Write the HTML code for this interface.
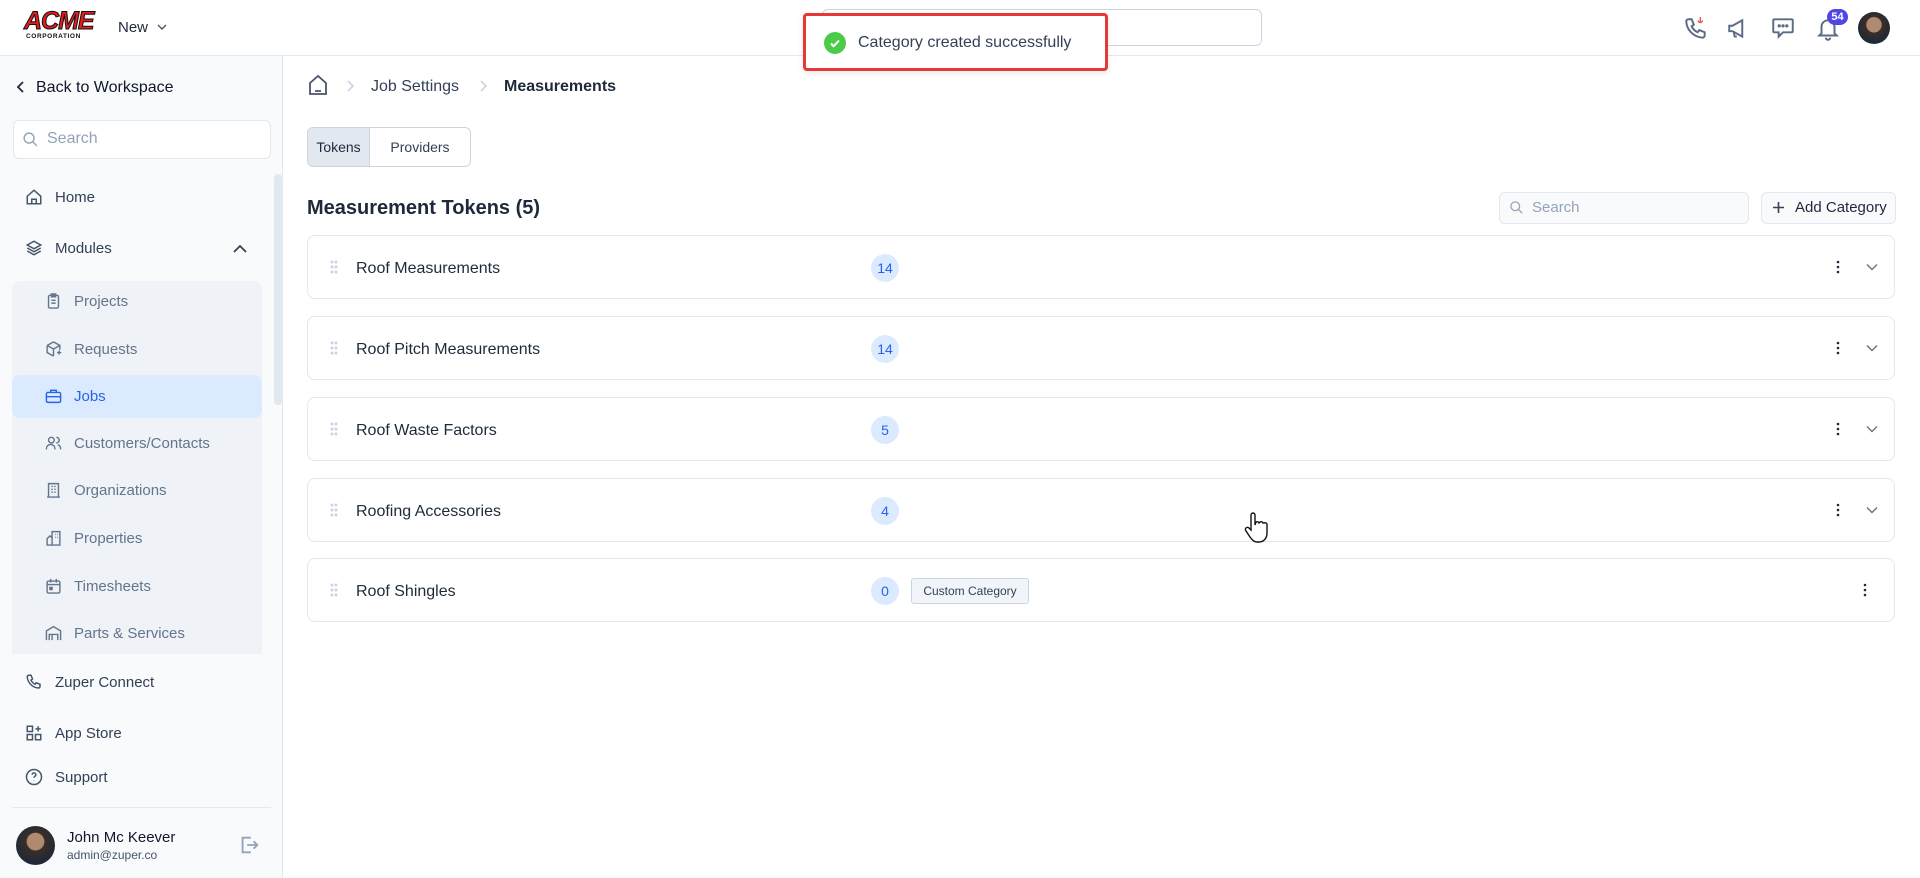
<!DOCTYPE html>
<html><head><meta charset="utf-8"><style>
*{box-sizing:border-box;margin:0;padding:0}
body{width:1920px;height:878px;overflow:hidden;background:#fff;font-family:"Liberation Sans",sans-serif;color:#1e293b;position:relative}
.abs{position:absolute}
svg{display:block}
.hdr{left:0;top:0;width:1920px;height:56px;border-bottom:1px solid #e2e8f0;background:#fff}
.side{left:0;top:56px;width:283px;height:822px;background:#f8fafc;border-right:1px solid #e2e8f0}
.nav{position:absolute;display:flex;align-items:center;font-size:15px;color:#334155}
.nav svg{margin-right:12px}
.sub{color:#64748b}
.row{position:absolute;left:307px;width:1588px;height:64px;border:1px solid #e2e8f0;border-radius:8px;background:#fff}
.row .t{position:absolute;left:48px;top:24px;font-size:16px;color:#1e293b}
.row .b{position:absolute;left:563px;top:18px;width:28px;height:28px;border-radius:50%;background:#dbeafe;color:#2563eb;font-size:14px;text-align:center;line-height:28px}
.row .d{position:absolute;left:22px;top:24px}
.row .k{position:absolute;left:1528px;top:23px}
.row .c{position:absolute;left:1558px;top:27px}
</style></head><body>
<div class="abs hdr"></div>
<div class="abs" style="left:24px;top:8px;font-family:'Liberation Sans';font-weight:900;font-style:italic;font-size:25px;color:#e11d1d;letter-spacing:-1px;line-height:26px;-webkit-text-stroke:1px #111">ACME</div>
<div class="abs" style="left:26px;top:33px;font-size:6.5px;font-weight:bold;color:#111;letter-spacing:0.6px">CORPORATION</div>
<div class="abs" style="left:118px;top:19px;font-size:15px;color:#1e293b">New</div>
<svg class="abs" style="left:157px;top:23px" width="10" height="8" viewBox="0 0 10 8"><path d="M1 2l4 4 4-4" fill="none" stroke="#475569" stroke-width="1.4"/></svg>
<div class="abs" style="left:822px;top:9px;width:440px;height:37px;border:1px solid #cbd5e1;border-radius:6px"></div>
<div class="abs" style="left:803px;top:13px;width:305px;height:58px;border:3px solid #e53935;border-radius:4px;background:#fff;box-shadow:0 2px 6px rgba(0,0,0,.1)"></div>
<div class="abs" style="left:824px;top:32px;width:22px;height:22px;border-radius:50%;background:#4ccb48"></div>
<svg class="abs" style="left:828px;top:36px" width="14" height="14" viewBox="0 0 14 14"><path d="M3 7.5l2.7 2.7L11 4.5" fill="none" stroke="#fff" stroke-width="2"/></svg>
<div class="abs" style="left:858px;top:34px;font-size:16px;color:#334155">Category created successfully</div>
<svg class="abs" style="left:1683px;top:16px" width="26" height="26" viewBox="0 0 24 24" fill="none" stroke="#5b6b82" stroke-width="1.8"><path d="M5 3h3l2 5-2 1.5a11 11 0 005.5 5.5L15 13l5 2v3a2 2 0 01-2 2A16 16 0 013 5a2 2 0 012-2z"/><path d="M16 1v5M14 4a2 2 0 004 0" stroke="#ef4444" stroke-width="1.2"/></svg>
<svg class="abs" style="left:1726px;top:16px" width="26" height="26" viewBox="0 0 24 24" fill="none" stroke="#5b6b82" stroke-width="1.8"><path d="M3 9v5h3l9 5V4L6 9H3zM7 14l1 5h2"/></svg>
<svg class="abs" style="left:1770px;top:15px" width="26" height="26" viewBox="0 0 24 24" fill="none" stroke="#5b6b82" stroke-width="1.8"><path d="M4 4h16a1 1 0 011 1v10a1 1 0 01-1 1h-8l-4 4v-4H4a1 1 0 01-1-1V5a1 1 0 011-1z"/><circle cx="8.5" cy="10" r=".6" fill="#5b6b82"/><circle cx="12" cy="10" r=".6" fill="#5b6b82"/><circle cx="15.5" cy="10" r=".6" fill="#5b6b82"/></svg>
<svg class="abs" style="left:1815px;top:16px" width="26" height="26" viewBox="0 0 24 24" fill="none" stroke="#5b6b82" stroke-width="1.8"><path d="M6 16V10a6 6 0 0112 0v6l2 2H4l2-2zM10 20a2 2 0 004 0"/></svg>
<div class="abs" style="left:1827px;top:9px;width:21px;height:16px;border-radius:8px;background:#4f46e5;color:#fff;font-size:11px;font-weight:bold;text-align:center;line-height:16px">54</div>
<div class="abs" style="left:1858px;top:12px;width:32px;height:32px;border-radius:50%;background:radial-gradient(circle at 50% 40%,#b08a70 0 30%,#3a2e28 32%,#1f2937 70%)"></div>
<div class="abs side"></div>
<svg class="abs" style="left:16px;top:81px" width="10" height="12" viewBox="0 0 10 12"><path d="M7 1L2 6l5 5" fill="none" stroke="#1e293b" stroke-width="1.8"/></svg>
<div class="abs" style="left:36px;top:79px;font-size:16px;color:#0f172a">Back to Workspace</div>
<div class="abs" style="left:13px;top:120px;width:258px;height:39px;background:#fff;border:1px solid #e2e8f0;border-radius:6px"></div>
<svg class="abs" style="left:22px;top:131px" width="17" height="17" viewBox="0 0 24 24" fill="none" stroke="#94a3b8" stroke-width="2"><circle cx="10" cy="10" r="7"/><path d="M15 15l6 6"/></svg>
<div class="abs" style="left:47px;top:130px;font-size:16px;color:#94a3b8">Search</div>
<div class="abs" style="left:274px;top:174px;width:8px;height:231px;border-radius:4px;background:#e2e8f0"></div>
<div class="nav" style="left:25px;top:188px"><svg width="18" height="18" viewBox="0 0 24 24" fill="none" stroke="#475569" stroke-width="2"><path d="M3 11l9-8 9 8v10H3zM9 21v-6h6v6"/></svg>Home</div>
<div class="nav" style="left:25px;top:239px"><svg width="18" height="18" viewBox="0 0 24 24" fill="none" stroke="#475569" stroke-width="2"><path d="M12 3l9 5-9 5-9-5zM3 12l9 5 9-5M3 16l9 5 9-5"/></svg>Modules</div>
<svg class="abs" style="left:233px;top:244px" width="14" height="9" viewBox="0 0 14 9"><path d="M1 8l6-6 6 6" fill="none" stroke="#334155" stroke-width="1.8"/></svg>
<div class="abs" style="left:12px;top:281px;width:250px;height:373px;background:#eff3f8;border-radius:8px 8px 0 0"></div>
<div class="abs" style="left:12px;top:375px;width:250px;height:43px;background:#dbeafe;border-radius:8px"></div>
<div class="nav sub" style="left:45px;top:292px"><svg width="17" height="18" viewBox="0 0 24 24" fill="none" stroke="#64748b" stroke-width="2"><rect x="5" y="4" width="14" height="18" rx="2"/><path d="M9 2h6v4H9zM9 11h6M9 15h6"/></svg>Projects</div>
<div class="nav sub" style="left:45px;top:340px"><svg width="17" height="18" viewBox="0 0 24 24" fill="none" stroke="#64748b" stroke-width="2"><path d="M12 2l9 5v6M3 7l9-5M3 7v10l9 5M3 7l9 5 9-5M12 12v10M17 17h6M20 14v6"/></svg>Requests</div>
<div class="nav" style="left:45px;top:387px;color:#2563eb"><svg width="17" height="18" viewBox="0 0 24 24" fill="none" stroke="#2563eb" stroke-width="2"><rect x="2" y="7" width="20" height="14" rx="2"/><path d="M8 7V4h8v3M2 13h20M12 12v2"/></svg>Jobs</div>
<div class="nav sub" style="left:45px;top:434px"><svg width="17" height="18" viewBox="0 0 24 24" fill="none" stroke="#64748b" stroke-width="2"><circle cx="9" cy="8" r="4"/><path d="M2 21v-1a6 6 0 0112 0v1M16 4a4 4 0 010 8M22 21v-1a6 6 0 00-4-5.6"/></svg>Customers/Contacts</div>
<div class="nav sub" style="left:45px;top:481px"><svg width="17" height="18" viewBox="0 0 24 24" fill="none" stroke="#64748b" stroke-width="2"><path d="M5 22V3h14v19M3 22h18M9 7h2M13 7h2M9 11h2M13 11h2M9 15h2M13 15h2"/></svg>Organizations</div>
<div class="nav sub" style="left:45px;top:529px"><svg width="17" height="18" viewBox="0 0 24 24" fill="none" stroke="#64748b" stroke-width="2"><path d="M10 22V3h11v19zM3 22V13l4-4 3 3M2 22h20M14 7h1M17 7h1M14 11h1M17 11h1"/></svg>Properties</div>
<div class="nav sub" style="left:45px;top:577px"><svg width="17" height="18" viewBox="0 0 24 24" fill="none" stroke="#64748b" stroke-width="2"><rect x="3" y="5" width="18" height="17" rx="2"/><path d="M8 2v5M16 2v5M3 10h18"/><rect x="7" y="14" width="3" height="3" fill="#64748b"/></svg>Timesheets</div>
<div class="nav sub" style="left:45px;top:624px"><svg width="17" height="18" viewBox="0 0 24 24" fill="none" stroke="#64748b" stroke-width="2"><path d="M2 22V9l10-6 10 6v13M6 22v-8h12v8M10 14v8"/></svg>Parts &amp; Services</div>
<div class="nav" style="left:25px;top:673px"><svg width="18" height="18" viewBox="0 0 24 24" fill="none" stroke="#475569" stroke-width="2"><path d="M5 3h3l2 5-2 1.5a11 11 0 005.5 5.5L15 13l5 2v3a2 2 0 01-2 2A16 16 0 013 5a2 2 0 012-2z"/></svg>Zuper Connect</div>
<div class="nav" style="left:25px;top:724px"><svg width="18" height="18" viewBox="0 0 24 24" fill="none" stroke="#475569" stroke-width="2"><rect x="3" y="3" width="7" height="7"/><rect x="3" y="14" width="7" height="7"/><rect x="14" y="14" width="7" height="7"/><path d="M17.5 3v7M14 6.5h7"/></svg>App Store</div>
<div class="nav" style="left:25px;top:768px"><svg width="18" height="18" viewBox="0 0 24 24" fill="none" stroke="#475569" stroke-width="2"><circle cx="12" cy="12" r="10"/><path d="M9.5 9a2.5 2.5 0 115 0c0 2-2.5 2-2.5 4M12 17v.5"/></svg>Support</div>
<div class="abs" style="left:12px;top:807px;width:259px;height:1px;background:#e2e8f0"></div>
<div class="abs" style="left:16px;top:826px;width:39px;height:39px;border-radius:50%;background:radial-gradient(circle at 50% 40%,#b08a70 0 28%,#3a2e28 30%,#1f2937 70%)"></div>
<div class="abs" style="left:67px;top:829px;font-size:15px;color:#0f172a">John Mc Keever</div>
<div class="abs" style="left:67px;top:848px;font-size:12px;color:#475569">admin@zuper.co</div>
<svg class="abs" style="left:238px;top:834px" width="22" height="22" viewBox="0 0 24 24" fill="none" stroke="#94a3b8" stroke-width="2"><path d="M14 4H5v16h9M10 12h11M17 8l4 4-4 4"/></svg>
<svg class="abs" style="left:308px;top:74px" width="20" height="22" viewBox="0 0 20 22" fill="none" stroke="#475569" stroke-width="1.8"><path d="M2 9l8-7 8 7v11H2zM7 17h6"/></svg>
<svg class="abs" style="left:346px;top:80px" width="8" height="12" viewBox="0 0 8 12"><path d="M2 1l5 5-5 5" fill="none" stroke="#cbd5e1" stroke-width="1.6"/></svg>
<div class="abs" style="left:371px;top:78px;font-size:16px;color:#334155">Job Settings</div>
<svg class="abs" style="left:479px;top:80px" width="8" height="12" viewBox="0 0 8 12"><path d="M2 1l5 5-5 5" fill="none" stroke="#cbd5e1" stroke-width="1.6"/></svg>
<div class="abs" style="left:504px;top:78px;font-size:16px;font-weight:bold;color:#1e293b">Measurements</div>
<div class="abs" style="left:307px;top:127px;width:164px;height:40px;border:1px solid #cbd5e1;border-radius:6px;overflow:hidden;display:flex;font-size:14px">
<div style="width:62px;background:#e2e8f0;border-right:1px solid #cbd5e1;text-align:center;line-height:38px;color:#1e293b">Tokens</div>
<div style="flex:1;text-align:center;line-height:38px;color:#334155">Providers</div></div>
<div class="abs" style="left:307px;top:197px;font-size:20px;font-weight:bold;color:#1e293b">Measurement Tokens (5)</div>
<div class="abs" style="left:1499px;top:192px;width:250px;height:32px;border:1px solid #e2e8f0;border-radius:6px;background:#f8fafc"></div>
<svg class="abs" style="left:1509px;top:200px" width="15" height="15" viewBox="0 0 24 24" fill="none" stroke="#94a3b8" stroke-width="2"><circle cx="10" cy="10" r="7"/><path d="M15 15l6 6"/></svg>
<div class="abs" style="left:1532px;top:199px;font-size:15px;color:#94a3b8">Search</div>
<div class="abs" style="left:1761px;top:192px;width:135px;height:32px;border:1px solid #e2e8f0;border-radius:6px;background:#f8fafc"></div>
<svg class="abs" style="left:1772px;top:201px" width="13" height="13" viewBox="0 0 13 13"><path d="M6.5 1v11M1 6.5h11" stroke="#334155" stroke-width="1.6"/></svg>
<div class="abs" style="left:1795px;top:199px;font-size:15px;color:#1e293b">Add Category</div>

<div class="row" style="top:235px"><svg class="d" width="8" height="14"><g fill="#cbd5e1"><circle cx="2" cy="2" r="1.5"/><circle cx="6" cy="2" r="1.5"/><circle cx="2" cy="7" r="1.5"/><circle cx="6" cy="7" r="1.5"/><circle cx="2" cy="12" r="1.5"/><circle cx="6" cy="12" r="1.5"/></g></svg><div class="t">Roof Measurements</div><div class="b">14</div><svg class="k" width="4" height="16"><g fill="#1e293b"><circle cx="2" cy="3" r="1.3"/><circle cx="2" cy="8" r="1.3"/><circle cx="2" cy="13" r="1.3"/></g></svg><svg class="c" width="12" height="8"><path d="M1 1.5l5 5 5-5" fill="none" stroke="#64748b" stroke-width="1.4"/></svg></div>
<div class="row" style="top:316px"><svg class="d" width="8" height="14"><g fill="#cbd5e1"><circle cx="2" cy="2" r="1.5"/><circle cx="6" cy="2" r="1.5"/><circle cx="2" cy="7" r="1.5"/><circle cx="6" cy="7" r="1.5"/><circle cx="2" cy="12" r="1.5"/><circle cx="6" cy="12" r="1.5"/></g></svg><div class="t">Roof Pitch Measurements</div><div class="b">14</div><svg class="k" width="4" height="16"><g fill="#1e293b"><circle cx="2" cy="3" r="1.3"/><circle cx="2" cy="8" r="1.3"/><circle cx="2" cy="13" r="1.3"/></g></svg><svg class="c" width="12" height="8"><path d="M1 1.5l5 5 5-5" fill="none" stroke="#64748b" stroke-width="1.4"/></svg></div>
<div class="row" style="top:397px"><svg class="d" width="8" height="14"><g fill="#cbd5e1"><circle cx="2" cy="2" r="1.5"/><circle cx="6" cy="2" r="1.5"/><circle cx="2" cy="7" r="1.5"/><circle cx="6" cy="7" r="1.5"/><circle cx="2" cy="12" r="1.5"/><circle cx="6" cy="12" r="1.5"/></g></svg><div class="t">Roof Waste Factors</div><div class="b">5</div><svg class="k" width="4" height="16"><g fill="#1e293b"><circle cx="2" cy="3" r="1.3"/><circle cx="2" cy="8" r="1.3"/><circle cx="2" cy="13" r="1.3"/></g></svg><svg class="c" width="12" height="8"><path d="M1 1.5l5 5 5-5" fill="none" stroke="#64748b" stroke-width="1.4"/></svg></div>
<div class="row" style="top:478px"><svg class="d" width="8" height="14"><g fill="#cbd5e1"><circle cx="2" cy="2" r="1.5"/><circle cx="6" cy="2" r="1.5"/><circle cx="2" cy="7" r="1.5"/><circle cx="6" cy="7" r="1.5"/><circle cx="2" cy="12" r="1.5"/><circle cx="6" cy="12" r="1.5"/></g></svg><div class="t">Roofing Accessories</div><div class="b">4</div><svg class="k" width="4" height="16"><g fill="#1e293b"><circle cx="2" cy="3" r="1.3"/><circle cx="2" cy="8" r="1.3"/><circle cx="2" cy="13" r="1.3"/></g></svg><svg class="c" width="12" height="8"><path d="M1 1.5l5 5 5-5" fill="none" stroke="#64748b" stroke-width="1.4"/></svg></div>
<div class="row" style="top:558px"><svg class="d" width="8" height="14"><g fill="#cbd5e1"><circle cx="2" cy="2" r="1.5"/><circle cx="6" cy="2" r="1.5"/><circle cx="2" cy="7" r="1.5"/><circle cx="6" cy="7" r="1.5"/><circle cx="2" cy="12" r="1.5"/><circle cx="6" cy="12" r="1.5"/></g></svg><div class="t">Roof Shingles</div><div class="b">0</div>
<div style="position:absolute;left:603px;top:19px;width:118px;height:26px;border:1px solid #cbd5e1;border-radius:3px;background:#f1f5f9;font-size:12px;color:#334155;text-align:center;line-height:24px">Custom Category</div>
<svg class="k" style="left:1555px" width="4" height="16"><g fill="#1e293b"><circle cx="2" cy="3" r="1.3"/><circle cx="2" cy="8" r="1.3"/><circle cx="2" cy="13" r="1.3"/></g></svg></div>
<svg class="abs" style="left:1243px;top:512px" width="26" height="34" viewBox="0 0 26 34"><path d="M8 3a2 2 0 014 0v10l1-3a2 2 0 013 1l1-1a2 2 0 013 1l1 0a2 2 0 013 2v8c0 6-4 9-8 9h-2c-3 0-5-2-7-5l-4-6a2 2 0 013-3l2 2z" fill="#fff" stroke="#111" stroke-width="1.4"/></svg>
</body></html>
